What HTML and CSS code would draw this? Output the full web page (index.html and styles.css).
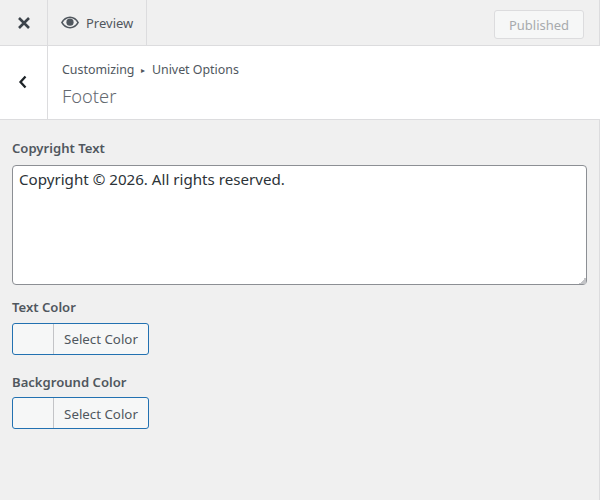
FILE: index.html
```html
<!DOCTYPE html>
<html lang="en">
<head>
    <meta charset="UTF-8">
    <title>Customizing Footer</title>
    <link rel="stylesheet" href="styles.css">
</head>
<body>
    <div class="sidebar">
        <div class="topbar">
            <div class="close-btn">
                <svg width="14" height="14" viewBox="0 0 14 14"><path d="M2 2l10 10M12 2L2 12" stroke="#3c434a" stroke-width="2.6" fill="none"/></svg>
            </div>
            <div class="preview-btn">
                <svg width="18" height="13" viewBox="0 0 18 13"><path d="M9 .5C5.2.5 2 2.8 0 6.5c2 3.700 5.200 6 9 6s7-2.300 9-6C16 2.800 12.800.5 9 .5z" fill="#50575e"/><path d="M9 2C6.300 2 3.600 3.600 1.800 6.500 3.600 9.400 6.300 11 9 11s5.400-1.600 7.200-4.500C14.400 3.600 11.700 2 9 2z" fill="#f0f0f0"/><circle cx="9" cy="6.200" r="3.600" fill="#50575e"/></svg>
                <span>Preview</span>
            </div>
            <button class="publish-btn">Published</button>
        </div>
        <div class="section-head">
            <div class="back-btn">
                <svg width="10" height="16" viewBox="0 0 10 16"><path d="M7.500 2.500L2.500 8l5 5.500" stroke="#1d2327" stroke-width="2.300" fill="none"/></svg>
            </div>
            <div class="section-title">
                <div class="crumbs">Customizing <span class="arrow">▸</span> Univet Options</div>
                <h2>Footer</h2>
            </div>
        </div>
        <div class="controls">
            <div class="control">
                <label class="control-label">Copyright Text</label>
                <textarea class="copy-text">Copyright © 2026. All rights reserved.</textarea>
            </div>
            <div class="control">
                <label class="control-label">Text Color</label>
                <div class="color-btn">
                    <span class="swatch"></span>
                    <span class="color-text">Select Color</span>
                </div>
            </div>
            <div class="control">
                <label class="control-label label-tight">Background Color</label>
                <div class="color-btn">
                    <span class="swatch"></span>
                    <span class="color-text">Select Color</span>
                </div>
            </div>
        </div>
    </div>
</body>
</html>
```

FILE: styles.css
```css
html, body {
    margin: 0;
    padding: 0;
    height: 100%;
}

body {
    background: #f0f0f0;
    font-family: "Noto Sans", "Open Sans", sans-serif;
    color: #50575e;
    overflow: hidden;
}

.sidebar {
    height: 500px;
    box-sizing: border-box;
    border-right: 1px solid #dcdcde;
}

.topbar {
    display: flex;
    align-items: stretch;
    height: 45px;
    border-bottom: 1px solid #dcdcde;
}

.close-btn {
    width: 47px;
    border-right: 1px solid #dcdcde;
    display: flex;
    align-items: center;
    justify-content: center;
}

.preview-btn {
    width: 85px;
    border-right: 1px solid #dcdcde;
    display: flex;
    align-items: center;
    gap: 7px;
    padding-left: 13px;
    margin-right: auto;
    font-size: 13px;
}

.preview-btn svg {
    flex: none;
}

.publish-btn {
    align-self: flex-start;
    margin: 10px 15px 0 0;
    width: 90px;
    height: 29px;
    padding: 0;
    background: #f6f7f7;
    border: 1px solid #dcdcde;
    border-radius: 3px;
    color: #a7aaad;
    font-family: inherit;
    font-size: 13px;
}

.section-head {
    display: flex;
    height: 73px;
    background: #fff;
    border-bottom: 1px solid #dcdcde;
    margin-right: -1px;
}

.back-btn {
    width: 48px;
    border-right: 1px solid #dcdcde;
    display: flex;
    align-items: center;
    justify-content: center;
    padding-bottom: 2px;
    padding-right: 1px;
    box-sizing: border-box;
}

.section-title {
    padding: 14px 0 0 14px;
}

.crumbs {
    font-size: 12.4px;
    line-height: 19px;
}

.arrow {
    font-size: 8px;
    margin: 0 3.5px;
    vertical-align: 1px;
}

.section-title h2 {
    margin: 4px 0 0;
    font-size: 18.3px;
    line-height: 26px;
    font-weight: 300;
    color: #646970;
}

.controls {
    padding: 0 12px;
}

.control {
    margin-bottom: 18px;
}

.control:first-child {
    padding-top: 19px;
    margin-bottom: 13px;
}

.control-label {
    display: block;
    font-size: 13.1px;
    line-height: 18px;
    font-weight: 600;
    margin-bottom: 7px;
}

.control:first-child .control-label {
    margin-bottom: 8px;
}

.control-label.label-tight {
    margin-bottom: 6px;
}

.copy-text {
    display: block;
    width: 575px;
    height: 120px;
    box-sizing: border-box;
    margin: 0;
    padding: 2px 6px;
    background: #fff;
    border: 1px solid #8c8f94;
    border-radius: 4px;
    color: #2c3338;
    font-family: inherit;
    font-size: 15.15px;
    line-height: 22px;
}

.copy-text::-webkit-resizer {
    background: linear-gradient(135deg, transparent 50%, #c3c4c7 50%) no-repeat right bottom / 7px 7px;
}

.color-btn {
    display: flex;
    width: 137px;
    height: 32px;
    box-sizing: border-box;
    background: #f6f7f7;
    border: 1px solid #2271b1;
    border-radius: 3px;
    overflow: hidden;
}

.swatch {
    width: 40px;
    border-right: 1px solid #c3c4c7;
}

.color-text {
    flex: 1;
    text-align: center;
    font-size: 13.3px;
    line-height: 30px;
    color: #50575e;
}

.label-tight + .color-btn .color-text {
    padding-top: 1px;
}
```
